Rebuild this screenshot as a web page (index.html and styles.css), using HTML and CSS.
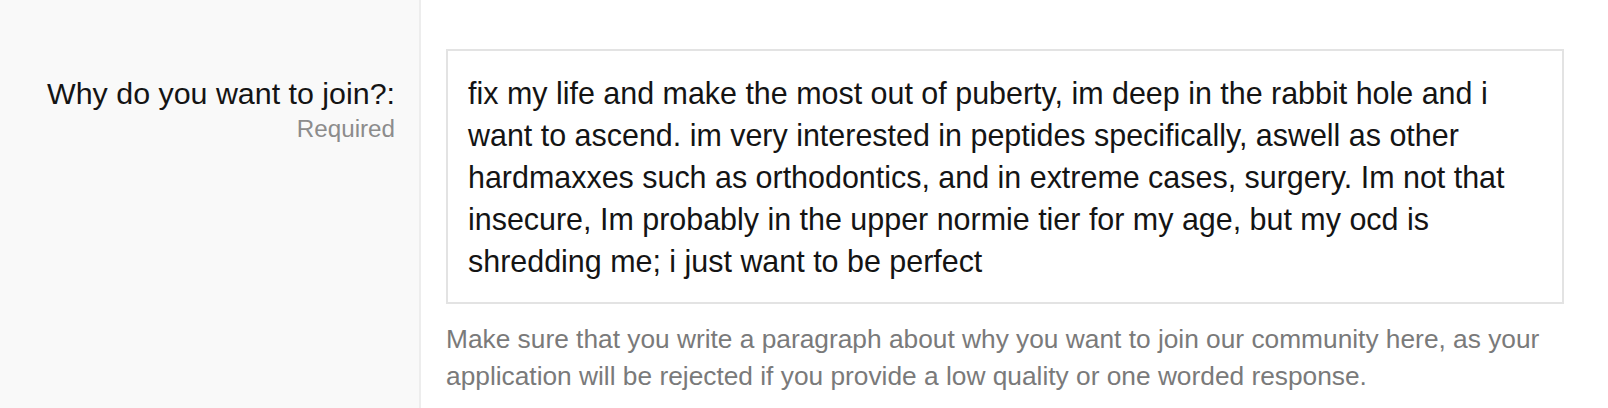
FILE: index.html
```html
<!DOCTYPE html>
<html lang="en">
<head>
<meta charset="utf-8">
<title>Why do you want to join?</title>
<link rel="stylesheet" href="styles.css">
</head>
<body>
<div class="form-row">
  <dt class="form-label">
    <div class="label-text">Why do you want to join?:</div>
    <div class="label-hint">Required</div>
  </dt>
  <dd class="form-input">
    <div class="textarea">fix my life and make the most out of puberty, im deep in the rabbit hole and i want to ascend. im very interested in peptides specifically, aswell as other hardmaxxes such as orthodontics, and in extreme cases, surgery. Im not that insecure, Im probably in the upper normie tier for my age, but my ocd is shredding me; i just want to be perfect</div>
    <div class="explain">Make sure that you write a paragraph about why you want to join our community here, as your application will be rejected if you provide a low quality or one worded response.</div>
  </dd>
</div>
</body>
</html>
```

FILE: styles.css
```css
html, body {
  margin: 0;
  padding: 0;
  background: #ffffff;
}

body {
  font-family: "Liberation Sans", Arial, Helvetica, sans-serif;
  color: #141414;
}

.form-row {
  display: flex;
  min-height: 408px;
}

.form-label {
  box-sizing: border-box;
  width: 421px;
  flex: none;
  margin: 0;
  background: #f9f9f9;
  border-right: 2px solid #ededed;
  padding: 72px 24px 0 0;
  text-align: right;
}

.label-text {
  font-size: 30.4px;
  line-height: 42px;
  color: #141414;
}

.label-hint {
  font-size: 24.2px;
  line-height: 30px;
  color: #8c8c8c;
}

.form-input {
  flex: 1;
  margin: 0;
  padding: 49px 44px 0 25px;
}

.textarea {
  border: 2px solid #e3e3e3;
  padding: 21px 20px 20px 20px;
  font-size: 30.45px;
  line-height: 42px;
  color: #141414;
}

.explain {
  margin-top: 17px;
  font-size: 26.3px;
  line-height: 36.5px;
  color: #7a7a7a;
}
```
